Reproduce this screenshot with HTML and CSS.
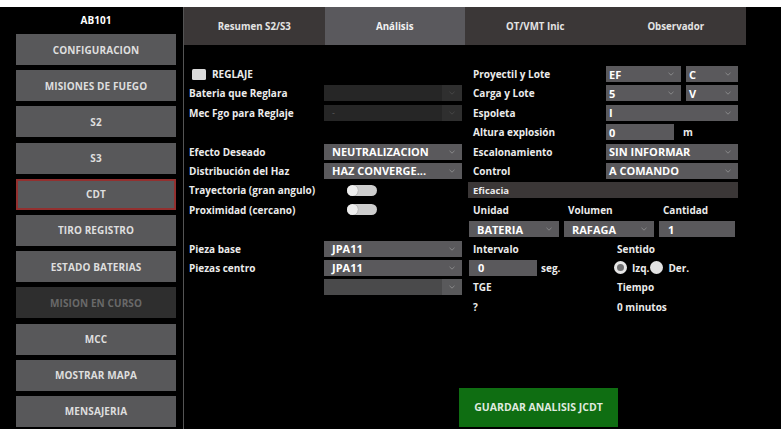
FILE: index.html
```html
<!DOCTYPE html>
<html lang="es">
<head>
<meta charset="utf-8">
<title>AB101 - CDT</title>
<link rel="stylesheet" href="styles.css">
</head>
<body>
<div class="topbar"></div>
<div class="app">
  <aside class="sidebar">
    <div class="unit">AB101</div>
    <nav class="menu">
      <button class="menu-btn">CONFIGURACION</button>
      <button class="menu-btn">MISIONES DE FUEGO</button>
      <button class="menu-btn">S2</button>
      <button class="menu-btn">S3</button>
      <button class="menu-btn current">CDT</button>
      <button class="menu-btn">TIRO REGISTRO</button>
      <button class="menu-btn">ESTADO BATERIAS</button>
      <button class="menu-btn disabled">MISION EN CURSO</button>
      <button class="menu-btn">MCC</button>
      <button class="menu-btn">MOSTRAR MAPA</button>
      <button class="menu-btn">MENSAJERIA</button>
    </nav>
  </aside>

  <main class="main">
    <div class="tabs">
      <div class="tab">Resumen S2/S3</div>
      <div class="tab active">Análisis</div>
      <div class="tab">OT/VMT Inic</div>
      <div class="tab">Observador</div>
    </div>

    <div class="form">
      <section class="col col-left">
        <div class="check full"><span class="box"></span><span>REGLAJE</span></div>

        <div class="label">Bateria que Reglara</div>
        <div class="select empty"><span class="value"></span><span class="arrow"><svg viewBox="0 0 6 4"><path d="M0.5 0.8 L3 3.2 L5.5 0.8"/></svg></span></div>

        <div class="label">Mec Fgo para Reglaje</div>
        <div class="select empty"><span class="value dash">-</span><span class="arrow"><svg viewBox="0 0 6 4"><path d="M0.5 0.8 L3 3.2 L5.5 0.8"/></svg></span></div>

        <div class="full"></div>

        <div class="label">Efecto Deseado</div>
        <div class="select"><span class="value">NEUTRALIZACION</span><span class="arrow"><svg viewBox="0 0 6 4"><path d="M0.5 0.8 L3 3.2 L5.5 0.8"/></svg></span></div>

        <div class="label">Distribución del Haz</div>
        <div class="select"><span class="value">HAZ CONVERGE...</span><span class="arrow"><svg viewBox="0 0 6 4"><path d="M0.5 0.8 L3 3.2 L5.5 0.8"/></svg></span></div>

        <div class="label">Trayectoria (gran angulo)</div>
        <div class="toggle"><span class="knob"></span></div>

        <div class="label">Proximidad (cercano)</div>
        <div class="toggle"><span class="knob"></span></div>

        <div class="full"></div>

        <div class="label">Pieza base</div>
        <div class="select"><span class="value">JPA11</span><span class="arrow"><svg viewBox="0 0 6 4"><path d="M0.5 0.8 L3 3.2 L5.5 0.8"/></svg></span></div>

        <div class="label">Piezas centro</div>
        <div class="select"><span class="value">JPA11</span><span class="arrow"><svg viewBox="0 0 6 4"><path d="M0.5 0.8 L3 3.2 L5.5 0.8"/></svg></span></div>

        <div class="label"></div>
        <div class="select blank"><span class="value"></span><span class="arrow"><svg viewBox="0 0 6 4"><path d="M0.5 0.8 L3 3.2 L5.5 0.8"/></svg></span></div>
      </section>

      <section class="col col-right">
        <div class="label">Proyectil y Lote</div>
        <div class="pair">
          <div class="select tight"><span class="value">EF</span><span class="arrow"><svg viewBox="0 0 6 4"><path d="M0.5 0.8 L3 3.2 L5.5 0.8"/></svg></span></div>
          <div class="select tight"><span class="value">C</span><span class="arrow"><svg viewBox="0 0 6 4"><path d="M0.5 0.8 L3 3.2 L5.5 0.8"/></svg></span></div>
        </div>

        <div class="label">Carga y Lote</div>
        <div class="pair">
          <div class="select tight"><span class="value">5</span><span class="arrow"><svg viewBox="0 0 6 4"><path d="M0.5 0.8 L3 3.2 L5.5 0.8"/></svg></span></div>
          <div class="select tight"><span class="value">V</span><span class="arrow"><svg viewBox="0 0 6 4"><path d="M0.5 0.8 L3 3.2 L5.5 0.8"/></svg></span></div>
        </div>

        <div class="label">Espoleta</div>
        <div class="select tight"><span class="value">I</span><span class="arrow"><svg viewBox="0 0 6 4"><path d="M0.5 0.8 L3 3.2 L5.5 0.8"/></svg></span></div>

        <div class="label">Altura explosión</div>
        <div class="with-unit">
          <div class="input tight alt">0</div>
          <span class="unit-text">m</span>
        </div>

        <div class="label">Escalonamiento</div>
        <div class="select tight"><span class="value">SIN INFORMAR</span><span class="arrow"><svg viewBox="0 0 6 4"><path d="M0.5 0.8 L3 3.2 L5.5 0.8"/></svg></span></div>

        <div class="label">Control</div>
        <div class="select tight"><span class="value">A COMANDO</span><span class="arrow"><svg viewBox="0 0 6 4"><path d="M0.5 0.8 L3 3.2 L5.5 0.8"/></svg></span></div>

        <div class="section-bar full">Eficacia</div>

        <div class="trio full">
          <div class="label">Unidad</div>
          <div class="label">Volumen</div>
          <div class="label">Cantidad</div>
        </div>

        <div class="trio full">
          <div class="select"><span class="value">BATERIA</span><span class="arrow"><svg viewBox="0 0 6 4"><path d="M0.5 0.8 L3 3.2 L5.5 0.8"/></svg></span></div>
          <div class="select"><span class="value">RAFAGA</span><span class="arrow"><svg viewBox="0 0 6 4"><path d="M0.5 0.8 L3 3.2 L5.5 0.8"/></svg></span></div>
          <div class="input">1</div>
        </div>

        <div class="duo full">
          <div class="label">Intervalo</div>
          <div class="label sub">Sentido</div>
        </div>

        <div class="duo full">
          <div class="with-unit first">
            <div class="input interval">0</div>
            <span class="unit-text">seg.</span>
          </div>
          <div class="radios">
            <span class="radio on"></span><span class="radio-text">Izq.</span>
            <span class="radio"></span><span class="radio-text">Der.</span>
          </div>
        </div>

        <div class="duo full">
          <div class="label">TGE</div>
          <div class="label sub">Tiempo</div>
        </div>

        <div class="duo full">
          <div class="label">?</div>
          <div class="label sub">0 minutos</div>
        </div>
      </section>
    </div>

    <div class="actions">
      <button class="save">GUARDAR ANALISIS JCDT</button>
    </div>
  </main>
</div>
</body>
</html>
```

FILE: styles.css
```css
html, body {
  margin: 0;
  padding: 0;
}

body {
  width: 781px;
  height: 429px;
  overflow: hidden;
  background: #000;
  color: #ececec;
  font-family: "Open Sans", "DejaVu Sans", sans-serif;
  font-weight: 700;
}

.topbar {
  height: 7px;
  background: #fff;
}

.app {
  display: flex;
  height: 422px;
}

/* ---------- left navigation ---------- */
.sidebar {
  width: 184px;
  box-sizing: border-box;
  padding: 0 7px 0 16px;
  border-right: 1px solid #545454;
  display: flex;
  flex-direction: column;
}

.unit {
  height: 26px;
  display: flex;
  align-items: center;
  justify-content: center;
  font-size: 10px;
  color: #fff;
}

.menu {
  display: flex;
  flex-direction: column;
  gap: 5.2px;
  margin-top: 1px;
}

.menu-btn {
  height: 31px;
  padding: 0;
  border: 0;
  background: #58585a;
  color: #dedede;
  font-family: inherit;
  font-weight: 700;
  font-size: 10px;
  letter-spacing: 0.1px;
}

.menu-btn.current {
  box-shadow: inset 0 0 0 2px #93302f;
}

.menu-btn.disabled {
  background: #2e2e2e;
  color: #696969;
}

/* ---------- main area ---------- */
.main {
  flex: 1;
  display: flex;
  flex-direction: column;
}

.tabs {
  display: flex;
  width: 562px;
  height: 38px;
}

.tab {
  flex: 1;
  display: flex;
  align-items: center;
  justify-content: center;
  background: #3b3737;
  color: #e4e4e4;
  font-size: 9.7px;
}

.tab.active {
  background: #5a595d;
  color: #f2f2f2;
}

.form {
  display: grid;
  grid-template-columns: 278px 270px;
  column-gap: 6px;
  padding-top: 21px;
}

.col {
  display: grid;
  grid-auto-rows: 16px;
  row-gap: 3.4px;
  align-items: center;
}

.col-left {
  grid-template-columns: 140px 138px;
}

.col-right {
  grid-template-columns: 138px 132px;
}

.full {
  grid-column: 1 / -1;
}

.label {
  padding-left: 5px;
  font-size: 10px;
  white-space: nowrap;
  color: #ebebeb;
}

.check {
  display: flex;
  align-items: center;
  gap: 6px;
  padding-left: 8px;
  font-size: 10px;
}

.box {
  width: 14px;
  height: 11px;
  border-radius: 1.5px;
  background: #d9d9d9;
}

/* dropdowns and inputs */
.select,
.input {
  height: 16px;
  box-sizing: border-box;
  display: flex;
  align-items: center;
  background: #5a595c;
  color: #fff;
  font-size: 11px;
  white-space: nowrap;
  overflow: hidden;
}

.select .value {
  flex: 1;
  padding-left: 8px;
}

.select .arrow {
  width: 20px;
  height: 100%;
  display: flex;
  align-items: center;
  justify-content: center;
}

.arrow svg {
  width: 6px;
  height: 4px;
  fill: none;
  stroke: #8d8d8f;
  stroke-width: 0.9;
}

.select.tight .value {
  padding-left: 3px;
}

.select.empty {
  background: #262626;
}

.select.empty .arrow {
  background: #2f2f2f;
}

.select.empty .arrow svg {
  stroke: #4a4a4a;
}

.value.dash {
  color: #5a5a5a;
  font-weight: 400;
  font-size: 9px;
}

.select.blank {
  background: #4a4a4b;
}

.select.blank .arrow {
  background: #59595b;
}

.input {
  padding-left: 9px;
}

.input.tight {
  padding-left: 3px;
}

.toggle {
  width: 30px;
  height: 11px;
  margin-left: 23px;
  border-radius: 6px;
  background: #cdcdcd;
  display: flex;
  align-items: center;
}

.knob {
  width: 11px;
  height: 11px;
  border-radius: 50%;
  background: #eeeeee;
  box-shadow: 0 0 1px rgba(0, 0, 0, 0.5);
}

.pair {
  display: flex;
  gap: 5px;
}

.pair .select:first-child {
  width: 75px;
}

.pair .select:last-child {
  width: 52px;
}

.with-unit {
  display: flex;
  align-items: center;
}

.input.alt {
  width: 68px;
}

.unit-text {
  margin-left: 9px;
  font-size: 10px;
}

.with-unit.first {
  padding-left: 1px;
}

.input.interval {
  width: 68px;
}

.with-unit.first .unit-text {
  margin-left: 4px;
}

.section-bar {
  height: 16px;
  display: flex;
  align-items: center;
  padding-left: 5px;
  background: #3b3737;
  font-size: 9.5px;
}

.trio {
  display: grid;
  grid-template-columns: 90px 90px 76px;
  column-gap: 5px;
  padding-left: 1px;
  align-items: center;
}

.trio .label {
  padding-left: 4px;
}

.duo {
  display: grid;
  grid-template-columns: 146px 1fr;
  align-items: center;
}

.duo .label.sub {
  padding-left: 3px;
}

.radios {
  display: flex;
  align-items: center;
  font-size: 10px;
}

.radio {
  width: 13px;
  height: 13px;
  border-radius: 50%;
  box-sizing: border-box;
  background: #e2e2e2;
}

.radio.on {
  border: 3px solid #e6e6e6;
  background: #6f6f71;
}

.radio-text {
  margin-left: 5px;
}

.radio-text + .radio {
  margin-left: 1px;
}

/* save action */
.actions {
  margin-top: 73px;
  padding-left: 275px;
}

.save {
  width: 159px;
  height: 39px;
  border: 0;
  padding: 0;
  background: #0f6e12;
  color: #dfe9df;
  font-family: inherit;
  font-weight: 700;
  font-size: 10.5px;
}
```
